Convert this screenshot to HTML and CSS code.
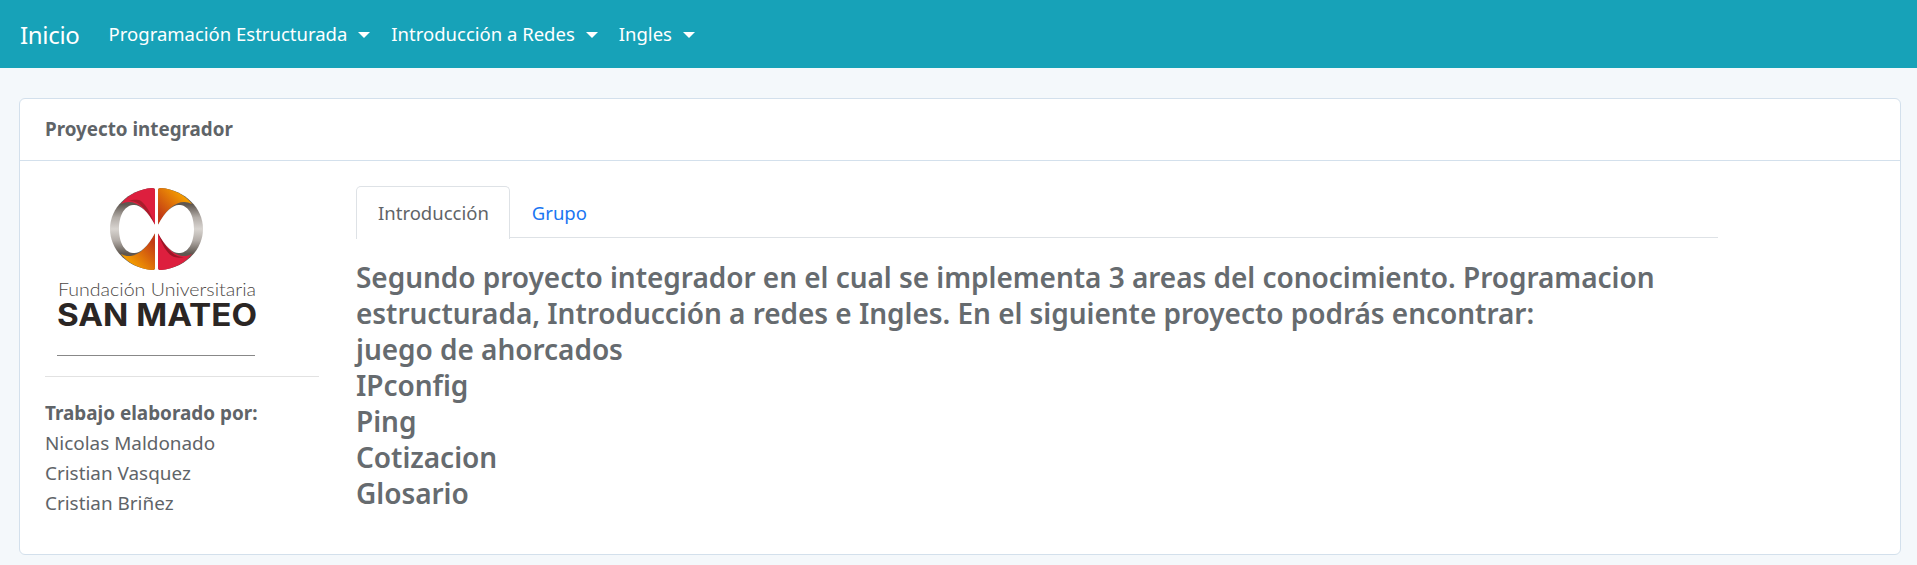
FILE: index.html
```html
<!DOCTYPE html>
<html lang="en">
<head>
<meta charset="UTF-8">
<meta name="viewport" content="width=device-width, initial-scale=1.0">
<title>Inicio</title>
<link rel="stylesheet" href="styles.css">
</head>
<body>

<nav class="navbar">
  <a class="brand" href="#">Inicio</a>
  <a class="nav-link" href="#">Programación Estructurada<span class="caret"></span></a>
  <a class="nav-link" href="#">Introducción a Redes<span class="caret"></span></a>
  <a class="nav-link" href="#">Ingles<span class="caret"></span></a>
</nav>

<div class="card">
  <div class="card-header">Proyecto integrador</div>
  <div class="card-body">
    <div class="side">
      <svg class="logo" width="274" height="190" viewBox="0 0 274 190">
        <defs>
          <linearGradient id="ring" x1="0" y1="0" x2="0" y2="1">
            <stop offset="0.2" stop-color="#5f5750"/>
            <stop offset="0.36" stop-color="#b3ada8"/>
            <stop offset="0.5" stop-color="#d8d4d0"/>
            <stop offset="0.64" stop-color="#b3ada8"/>
            <stop offset="0.8" stop-color="#5f5750"/>
          </linearGradient>
          <linearGradient id="orangeL" x1="0" y1="1" x2="1" y2="0">
            <stop offset="0.25" stop-color="#f39a00"/>
            <stop offset="0.85" stop-color="#c23a16"/>
          </linearGradient>
          <linearGradient id="orangeR" x1="1" y1="0" x2="0" y2="1">
            <stop offset="0.25" stop-color="#f39a00"/>
            <stop offset="0.85" stop-color="#c23a16"/>
          </linearGradient>
        </defs>
        <g transform="translate(65 2)">
          <path fill="url(#ring)" d="M45 2Q45 0 42 0C18 2 0 20 0 41C0 62 18 80 42 82Q45 82 45 80Z"/>
          <path fill="url(#ring)" d="M48 2Q48 0 51 0C75 2 93 20 93 41C93 62 75 80 51 82Q48 82 48 80Z"/>
          <path fill="#dd1f3e" d="M45 2Q45 0 42 0C29 1 18 7 11 16C22 10 35 17 45 37Z"/>
          <path fill="#a81d2c" d="M45 37C41 25 36 17 31 13C27 11 22 12 19 13C29 12 37 22 45 37Z"/>
          <path fill="url(#orangeR)" d="M48 2Q48 0 51 0C64 1 75 7 82 16C71 10 58 17 48 37Z"/>
          <path fill="url(#orangeL)" d="M45 80Q45 82 42 82C29 81 18 75 11 66C22 72 35 65 45 45Z"/>
          <path fill="#dd1f3e" d="M48 80Q48 82 51 82C64 81 75 75 82 66C71 72 58 65 48 45Z"/>
          <path fill="#9c1526" d="M48 45C52 57 57 65 62 68C66 70 70 70 74 69C64 70 56 60 48 45Z"/>
          <path fill="#fff" d="M45 37C37 22 29 16 23 17C13 18 9 30 9 41C9 52 13 64 23 65C29 66 37 60 45 45H48C56 60 64 66 70 65C80 64 84 52 84 41C84 30 80 18 70 17C64 16 56 22 48 37Z"/>
        </g>
        <text class="logo-top" x="13" y="110" textLength="198" lengthAdjust="spacingAndGlyphs">Fundación Universitaria</text>
        <text class="logo-main" x="12" y="140" textLength="200" lengthAdjust="spacingAndGlyphs">SAN MATEO</text>
        <rect x="12" y="169" width="198" height="1" fill="#888"/>
      </svg>
      <hr class="side-rule">
      <p class="author-title">Trabajo elaborado por:</p>
      <p class="author">Nicolas Maldonado</p>
      <p class="author">Cristian Vasquez</p>
      <p class="author">Cristian Briñez</p>
    </div>
    <div class="main">
      <ul class="tabs">
        <li class="tab active">Introducción</li>
        <li class="tab"><a href="#">Grupo</a></li>
      </ul>
      <h3 class="intro">Segundo proyecto integrador en el cual se implementa 3 areas del conocimiento. Programacion estructurada, Introducción a redes e Ingles. En el siguiente proyecto podrás encontrar:<br>juego de ahorcados<br>IPconfig<br>Ping<br>Cotizacion<br>Glosario</h3>
    </div>
  </div>
</div>

</body>
</html>
```

FILE: styles.css
```css
body {
  margin: 0;
  font-family: "Noto Sans", Arial, sans-serif;
  background-color: #f4f8fb;
  color: #5f6468;
}

.navbar {
  background-color: #17a2b8;
  height: 68px;
  display: flex;
  align-items: center;
  padding: 0 0 0 20px;
}

.navbar a {
  color: #fff;
  text-decoration: none;
}

.brand {
  font-size: 24px;
  letter-spacing: -0.3px;
  margin-right: 29px;
}

.nav-link {
  font-size: 18.5px;
  margin-right: 21px;
  position: relative;
  top: -1px;
}

.caret {
  display: inline-block;
  margin-left: 11px;
  vertical-align: 3px;
  border-top: 6px solid #fff;
  border-left: 6px solid transparent;
  border-right: 6px solid transparent;
}

.card {
  margin: 30px 16px 9px 19px;
  background-color: #fff;
  border: 1px solid #d3e0ec;
  border-radius: 6px;
  height: 457px;
  box-sizing: border-box;
}

.card-header {
  height: 61px;
  line-height: 61px;
  padding-left: 25px;
  font-size: 18.8px;
  font-weight: 700;
  border-bottom: 1px solid #d3e0ec;
}

.card-body {
  display: flex;
  padding: 25px 25px 0;
  gap: 37px;
}

.side {
  width: 274px;
  flex-shrink: 0;
}

.logo {
  display: block;
}

.side-rule {
  border: none;
  border-top: 1px solid #e2e2e2;
  margin: 0 0 21px;
}

.author-title,
.author {
  margin: 0;
  font-size: 18.9px;
  line-height: 30px;
}

.author-title {
  font-weight: 700;
}

.main {
  width: 1362px;
}

.tabs {
  list-style: none;
  display: flex;
  margin: 0 0 21px;
  padding: 0;
  border-bottom: 1px solid #dee2e6;
  height: 51px;
}

.tab {
  font-size: 18.5px;
  padding: 0 20px 0 21px;
  line-height: 52px;
  height: 51px;
  border: 1px solid transparent;
  border-bottom: none;
  border-radius: 5px 5px 0 0;
}

.tab a {
  color: #1a76f2;
  text-decoration: none;
}

.tab.active {
  border-color: #dee2e6;
  background-color: #fff;
  height: 52px;
}

.intro {
  margin: 0;
  font-size: 28px;
  font-weight: 600;
  line-height: 36px;
  letter-spacing: -0.04px;
  color: #666b6f;
}

.logo-top {
  font-family: Lato, sans-serif;
  font-weight: 300;
  font-size: 18px;
  fill: #4c4846;
}

.logo-main {
  font-family: Inter, sans-serif;
  font-weight: 700;
  font-size: 31px;
  fill: #2b2624;
}
```
